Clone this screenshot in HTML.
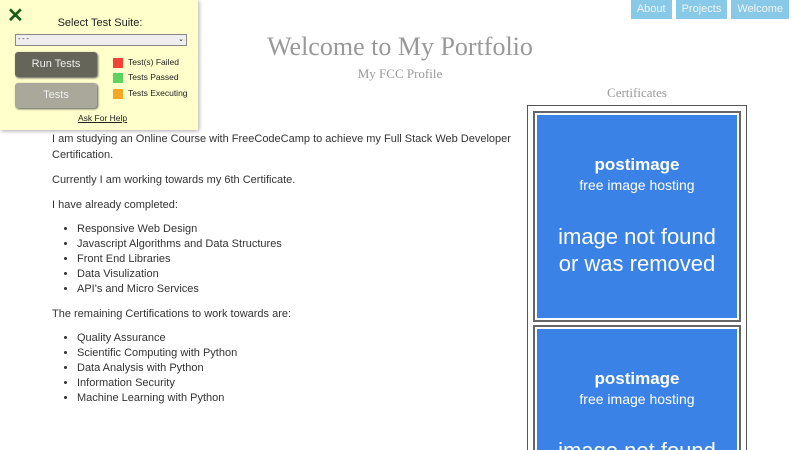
<!DOCTYPE html>
<html><head><style>
html,body{margin:0;width:800px;height:450px;overflow:hidden}
body{background:#fff;font-family:"Liberation Sans",sans-serif;position:relative}
.nav{position:absolute;top:0;right:0;display:flex}
.nav div{background:#87c9e6;color:#f3f3f3;font-size:11px;height:19px;line-height:19px;padding:0 6px;margin-left:4px}
h1{position:absolute;top:32px;left:0;width:800px;margin:0;text-align:center;font:26px "Liberation Serif",serif;color:#999}
.sub{position:absolute;top:66px;left:0;width:800px;text-align:center;font:13px "Liberation Serif",serif;color:#999}
.cert{position:absolute;top:85px;left:527px;width:220px;text-align:center;font:13px "Liberation Serif",serif;color:#999}
.main{position:absolute;left:52px;top:106px;font-size:11px;color:#333;line-height:16px;width:490px}
.main p{margin:0 0 9px}
.main ul{margin:0 0 9px;padding-left:25px;line-height:15px}
.outer{position:absolute;left:527px;top:105px;width:218px;height:344px;border:1px solid #555;border-bottom:none;overflow:hidden}
.inner{position:absolute;left:5px;width:204px;height:207px;border:2px solid #666;background:#fff;overflow:hidden}
.blue{position:absolute;left:2px;top:2px;width:200px;height:203px;background:#3b82e6;color:#fff;text-align:center}
.pi{font-size:17px;font-weight:bold;margin-top:40px}
.fh{font-size:14px;margin-top:2px}
.nf{font-size:22px;margin-top:30px;line-height:27px}
.ov{position:absolute;left:0;top:0;width:198px;height:130px;background:#ffffcc;box-shadow:1px 1px 4px #aaa;font-size:11px;color:#222}
.btn{position:absolute;left:15px;width:82px;height:25px;border-radius:3px;color:#eee;text-align:center;line-height:25px;font-size:11px;box-shadow:1px 1px 2px #555}
.lg{position:absolute;left:113px;font-size:8.5px}
.lg span{display:inline-block;width:10px;height:10px;vertical-align:middle;margin-right:5px}
</style></head><body>
<div class="nav"><div>About</div><div>Projects</div><div style="margin-right:11px">Welcome</div></div>
<h1>Welcome to My Portfolio</h1>
<div class="sub">My FCC Profile</div>
<div class="cert">Certificates</div>
<div class="main">
<p style="color:#ccc">Name: David Booth</p>
<p>I am studying an Online Course with FreeCodeCamp to achieve my Full Stack Web Developer Certification.</p>
<p>Currently I am working towards my 6th Certificate.</p>
<p>I have already completed:</p>
<ul><li>Responsive Web Design</li><li>Javascript Algorithms and Data Structures</li><li>Front End Libraries</li><li>Data Visulization</li><li>API's and Micro Services</li></ul>
<p>The remaining Certifications to work towards are:</p>
<ul><li>Quality Assurance</li><li>Scientific Computing with Python</li><li>Data Analysis with Python</li><li>Information Security</li><li>Machine Learning with Python</li></ul>
</div>
<div class="outer">
<div class="inner" style="top:5px"><div class="blue"><div class="pi">postimage</div><div class="fh">free image hosting</div><div class="nf">image not found<br>or was removed</div></div></div>
<div class="inner" style="top:219px"><div class="blue"><div class="pi">postimage</div><div class="fh">free image hosting</div><div class="nf">image not found<br>or was removed</div></div></div>
</div>
<div class="ov">
<div style="position:absolute;left:7px;top:3px;font-size:20px;font-weight:bold;color:#1a5c1a">✕</div>
<div style="position:absolute;top:17px;width:200px;text-align:center;font-size:11px">Select Test Suite:</div>
<div style="position:absolute;left:15px;top:34px;width:168px;height:10px;border:1px solid #888;background:#eee;font-size:7px;line-height:10px;padding-left:2px">- - -<span style="position:absolute;right:2px">⌄</span></div>
<div class="btn" style="top:52px;background:#66655a">Run Tests</div>
<div class="btn" style="top:83px;background:#a9a89a">Tests</div>
<div class="lg" style="top:57px"><span style="background:#f44336"></span>Test(s) Failed</div>
<div class="lg" style="top:72px"><span style="background:#5fd35f"></span>Tests Passed</div>
<div class="lg" style="top:88px"><span style="background:#f5a623"></span>Tests Executing</div>
<div style="position:absolute;top:113px;left:78px;font-size:8.5px;text-decoration:underline">Ask For Help</div>
</div>
</body></html>
